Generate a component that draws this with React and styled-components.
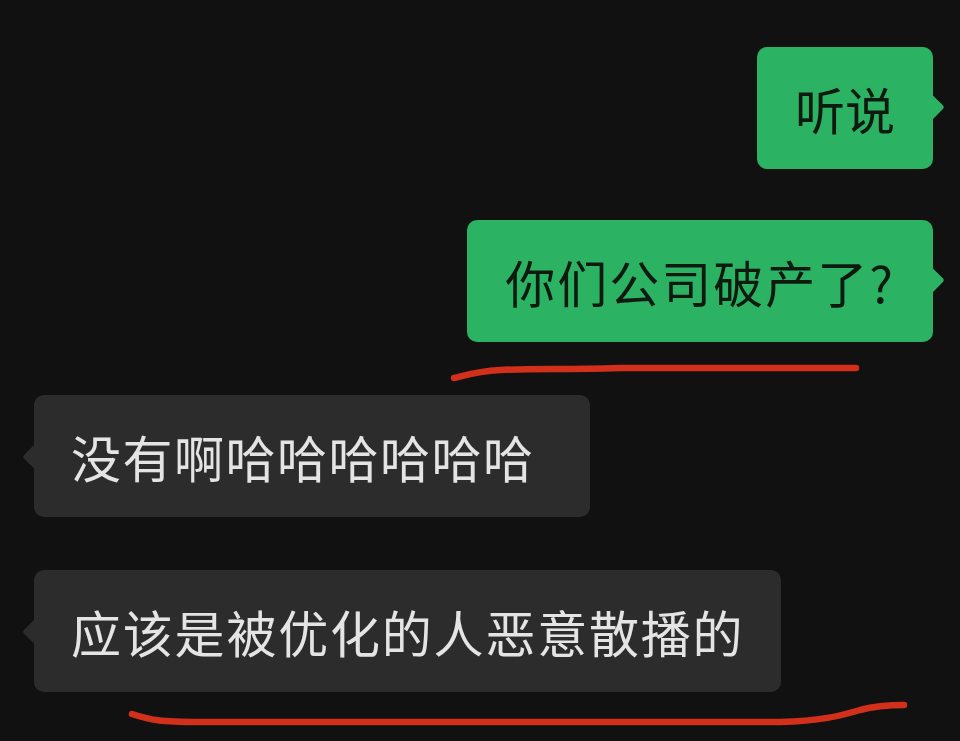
import React from "react";
import styled, { createGlobalStyle } from "styled-components";

const Global = createGlobalStyle`
  html, body { margin: 0; padding: 0; background: #111111; }
  body { font-family: "Noto Sans CJK SC", "Noto Sans", sans-serif; }
`;

const Page = styled.div`
  position: relative;
  width: 960px;
  height: 741px;
  overflow: hidden;
  background: #111111;
  box-sizing: border-box;
  padding: 47px 27px 0 34px;
  display: flex;
  flex-direction: column;
`;

const Row = styled.div`
  display: flex;
  justify-content: ${(p) => (p.$mine ? "flex-end" : "flex-start")};
  margin-top: ${(p) => p.$gap || 0}px;
`;

const Bubble = styled.div`
  position: relative;
  height: 122px;
  box-sizing: border-box;
  padding-left: ${(p) => (p.$mine ? 38 : 37)}px;
  padding-right: ${(p) => p.$pr || (p.$mine ? 38 : 37)}px;
  display: flex;
  align-items: center;
  border-radius: 10px;
  background: ${(p) => (p.$mine ? "#2bb363" : "#2c2c2c")};
  color: ${(p) => (p.$mine ? "#0e1a10" : "#e4e4e4")};
  font-size: 50px;
  font-weight: 400;
  letter-spacing: ${(p) => p.$ls ?? 1.5}px;
  line-height: 1;
  white-space: nowrap;

  &::after {
    content: "";
    position: absolute;
    top: 50%;
    width: 22px;
    height: 22px;
    background: inherit;
    border-radius: 3px;
    transform: translateY(-50%) rotate(45deg) scaleX(0.9);
    ${(p) => (p.$mine ? "right: -8px;" : "left: -8px;")}
  }
`;

const Marks = styled.svg`
  position: absolute;
  left: 0;
  top: 0;
  pointer-events: none;
`;

export default function App() {
  return (
    <>
      <Global />
      <Page>
        <Row $mine>
          <Bubble $mine $ls={0}>听说</Bubble>
        </Row>
        <Row $mine $gap={51}>
          <Bubble $mine $ls={2}>你们公司破产了?</Bubble>
        </Row>
        <Row $gap={53}>
          <Bubble $ls={1.5} $pr={55}>没有啊哈哈哈哈哈哈</Bubble>
        </Row>
        <Row $gap={53}>
          <Bubble $ls={1.8}>应该是被优化的人恶意散播的</Bubble>
        </Row>
        <Marks width="960" height="741" viewBox="0 0 960 741">
          <path
            d="M454 378 C 470 374, 480 371, 500 370 C 540 368, 560 370, 620 368 L 856 368"
            fill="none"
            stroke="#d3301c"
            strokeWidth="6.5"
            strokeLinecap="round"
          />
          <path
            d="M132 714 C 150 720, 160 722, 200 722 L 780 722 C 820 721, 840 716, 860 710 C 875 706, 890 705, 904 705"
            fill="none"
            stroke="#d3301c"
            strokeWidth="6.5"
            strokeLinecap="round"
          />
        </Marks>
      </Page>
    </>
  );
}
